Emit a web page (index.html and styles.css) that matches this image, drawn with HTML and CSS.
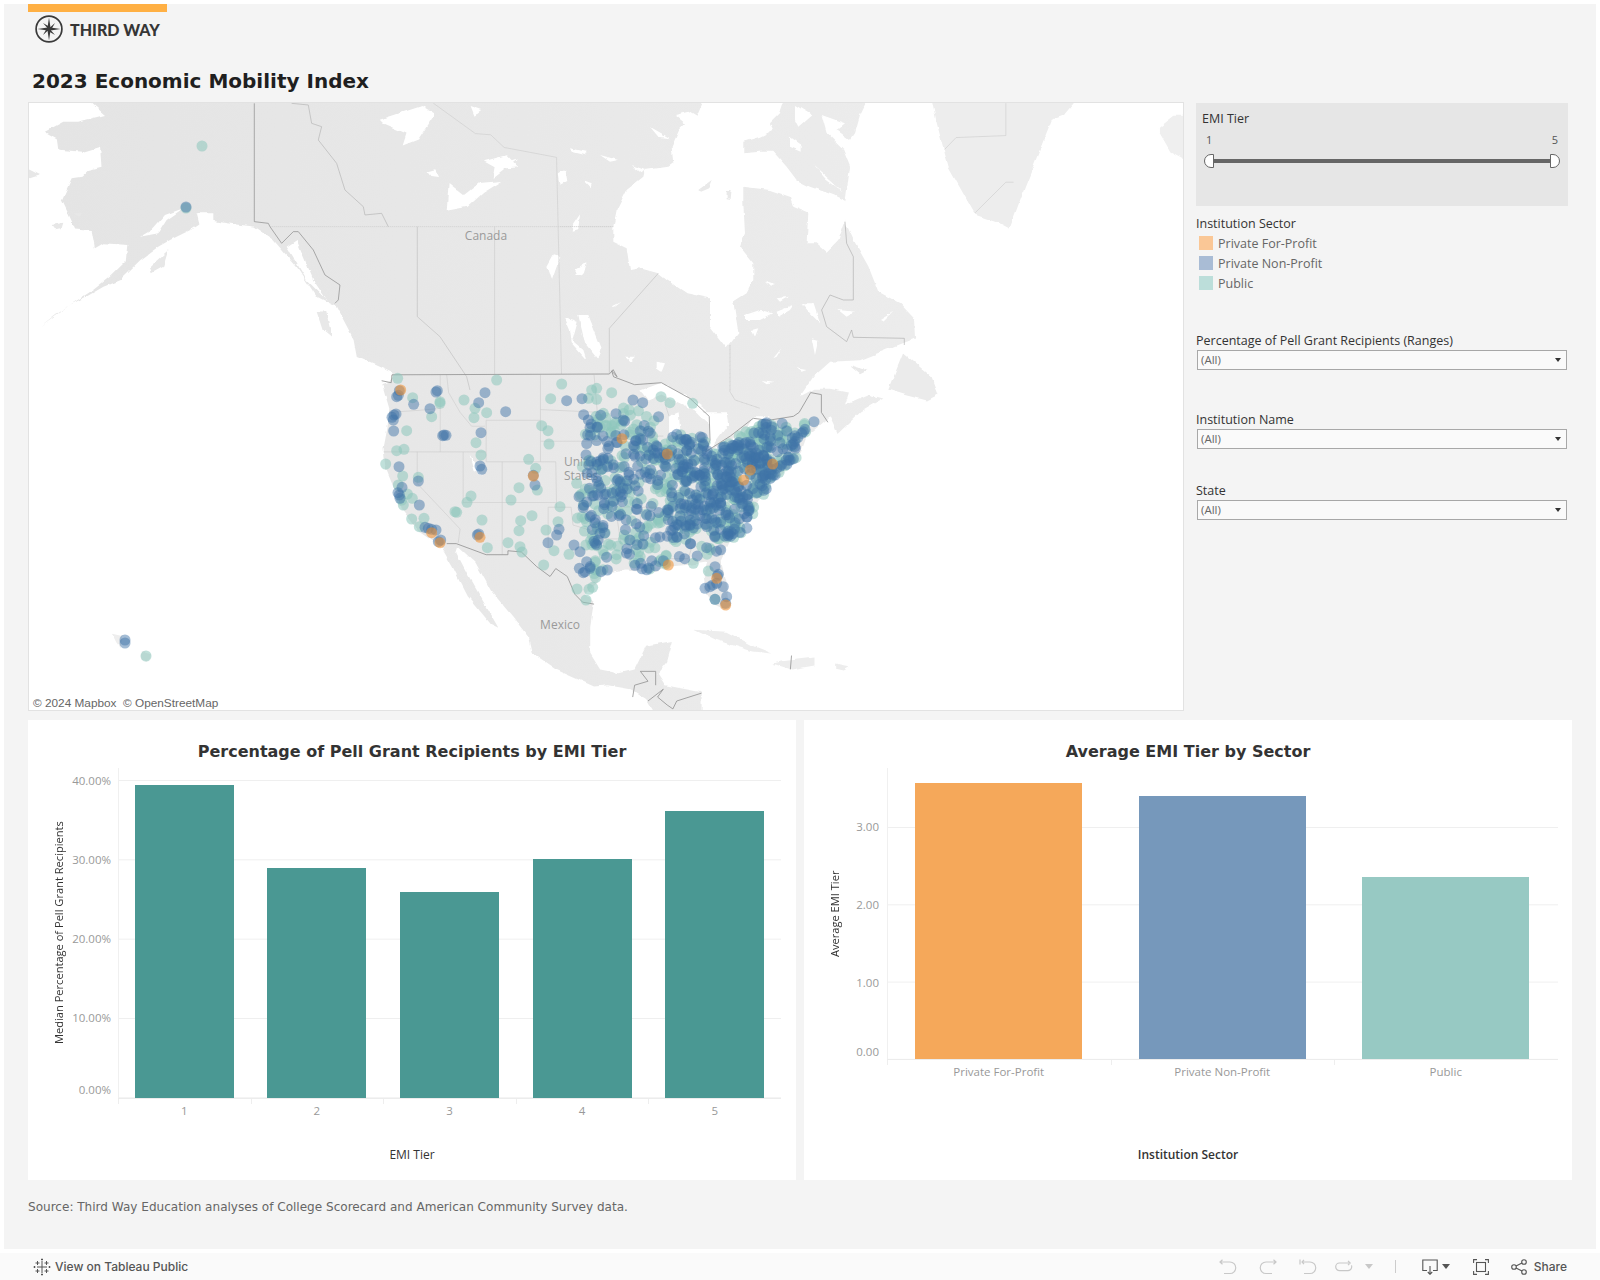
FILE: index.html
```html
<!DOCTYPE html>
<html lang="en">
<head>
<meta charset="utf-8">
<title>2023 Economic Mobility Index</title>
<link rel="stylesheet" href="styles.css">
</head>
<body>
<div class="dash">
  <div class="accent"></div>
  <div class="logo">
    <svg class="logo-mark" viewBox="0 0 28 28" width="28" height="28">
      <circle cx="14" cy="14" r="12.9" fill="none" stroke="#3a3a3a" stroke-width="1.7"/>
      <path d="M14 2.500 L15.500 12.500 L25.500 14 L15.500 15.500 L14 25.500 L12.500 15.500 L2.500 14 L12.500 12.500 Z" fill="#3a3a3a"/>
      <path d="M8 8 L15.300 12.200 L20 8 L15.800 15.300 L20 20 L12.700 15.800 L8 20 L12.200 12.700 Z" fill="#3a3a3a"/>
    </svg>
    <span class="logo-text">THIRD WAY</span>
  </div>
  <h1 class="title">2023 Economic Mobility Index</h1>

  <div class="top-row">
    <div class="map">
      <svg class="map-svg" viewBox="28 102 1156 609" width="1156" height="609">
        <defs>
          <linearGradient id="landTone" x1="0" x2="1" y1="0" y2="0">
            <stop offset="0" stop-color="#e4e4e4"/>
            <stop offset="0.55" stop-color="#e8e8e8"/>
            <stop offset="1" stop-color="#ececec"/>
          </linearGradient>
          <filter id="rough" filterUnits="userSpaceOnUse" x="-20" y="60" width="1260" height="700" color-interpolation-filters="sRGB">
            <feTurbulence type="fractalNoise" baseFrequency=".09" numOctaves="3" seed="4" result="n"/>
            <feDisplacementMap in="SourceGraphic" in2="n" scale="4" xChannelSelector="R" yChannelSelector="G"/>
          </filter>
        </defs>
        <g filter="url(#rough)">
          <!-- coast outlines -->
          <g transform="translate(20 100) scale(.3827 .3954)" fill="#e8e8e8">
            <path fill="url(#landTone)" d="M187 -30 L2230 -30 L2195 40 L2182 84 L2151 126 L2169 169 L2156 261 L2156 308 L2178 354 L2217 421 L2243 485 L2299 514 L2336 552 L2339 603 L2300 618 L2195 658 L2117 662 L2073 700 L2038 750 L2076 730 L2116 730 L2166 740 L2156 770 L2216 745 L2256 755 L2196 790 L2136 845 L2126 820 L2116 800 L2106 810 L2056 850 L2041 890 L2006 930 L1986 950 L1956 960 L1936 1000 L1916 1040 L1856 1115 L1831 1165 L1846 1220 L1856 1280 L1841 1290 L1816 1280 L1791 1240 L1786 1200 L1796 1170 L1756 1175 L1696 1180 L1646 1195 L1586 1190 L1546 1195 L1516 1210 L1476 1250 L1500 1270 L1490 1330 L1490 1400 L1516 1440 L1566 1450 L1606 1440 L1636 1380 L1706 1368 L1691 1420 L1666 1450 L1686 1480 L1781 1498 L1781 1600 L1690 1600 L1636 1515 L1596 1490 L1536 1480 L1500 1483 L1400 1440 L1340 1400 L1330 1360 L1290 1310 L1230 1240 L1190 1170 L1145 1130 L1140 1145 L1170 1200 L1250 1335 L1230 1325 L1170 1255 L1130 1180 L1100 1130 L1040 1090 L1000 1040 L985 1000 L955 930 L950 880 L960 830 L965 780 L945 715 L965 715 L975 690 L930 670 L880 650 L871 603 L827 523 L775 497 L723 422 L662 354 L610 320 L540 312 L488 303 L453 325 L392 354 L361 371 L314 405 L261 455 L218 472 L174 497 L131 518 L52 573 L96 540 L192 480 L235 447 L279 405 L283 367 L218 362 L196 375 L187 329 L144 325 L126 287 L109 253 L135 198 L161 194 L179 177 L213 169 L209 118 L165 131 L100 126 L96 97 L65 80 L113 55 L152 55 L222 38 L187 8 Z"/>
            <path fill="#ededed" d="M2376 -30 L2396 60 L2426 170 L2496 290 L2556 310 L2586 325 L2626 220 L2696 50 L2726 40 L2786 -30 Z"/>
            <path fill="#efefef" d="M2976 70 L3016 40 L3080 40 L3080 170 L3006 130 L2976 80 Z"/>
            <path fill="#ebebeb" d="M2269 733 L2308 640 L2382 700 L2400 745 L2370 760 L2310 745 Z"/>
            <path fill="#ededed" d="M1761 1340 L1846 1345 L1916 1380 L1966 1400 L1916 1395 L1816 1365 Z"/>
            <path fill="#ededed" d="M1986 1420 L2076 1410 L2076 1430 L2016 1440 L1966 1425 Z"/>
            <path fill="#ededed" d="M2130 1425 L2165 1432 L2150 1440 L2130 1436 Z"/>
            <path fill="#eeeeee" d="M240 1350 L270 1356 L262 1385 L252 1372 Z"/>
            <path fill="#eeeeee" d="M318 1396 L340 1402 L336 1418 L320 1416 Z"/>
            <path d="M775 535 L800 535 L815 600 L790 580 Z"/>
            <path fill="#ffffff" d="M1235 200 L1300 150 L1240 170 Z"/>
            <path fill="#ffffff" d="M940 50 L1050 15 L1085 35 L1040 100 L1000 115 L1010 85 L950 60 Z"/>
            <path fill="#ffffff" d="M1115 280 L1120 210 L1160 240 L1200 210 L1260 205 L1210 235 L1170 270 Z"/>
            <path fill="#ffffff" d="M1212 155 L1270 140 L1300 170 L1250 175 Z"/>
            <path fill="#ffffff" d="M1405 185 L1425 175 L1430 205 L1410 215 Z"/>
            <path fill="#ffffff" d="M1065 180 L1085 175 L1095 195 L1075 192 Z"/>
            <path fill="#ffffff" d="M1378 420 L1395 390 L1412 395 L1390 455 Z"/>
            <path fill="#ffffff" d="M1450 430 L1480 410 L1470 445 Z"/>
            <path fill="#ffffff" d="M1175 15 L1205 25 L1185 40 Z"/>
            <path fill="#ffffff" d="M1175 900 L1195 930 L1210 950 L1185 935 Z"/>
            <path fill="#ffffff" d="M920 730 L975 700 L965 715 Z"/>
            <path fill="#ffffff" d="M1621 735 L1676 715 L1751 755 L1796 785 L1771 790 L1731 770 L1676 745 L1641 760 Z"/>
            <path fill="#ffffff" d="M1696 800 L1721 790 L1726 840 L1711 870 L1696 840 Z"/>
            <path fill="#ffffff" d="M1756 780 L1791 790 L1846 790 L1851 820 L1801 885 L1801 820 L1776 800 Z"/>
            <path fill="#ffffff" d="M1791 890 L1856 860 L1876 850 L1861 870 L1806 900 Z"/>
            <path fill="#ffffff" d="M1916 800 L1961 800 L1946 825 L1901 830 Z"/>
          </g>
          <!-- Alaska details -->
          <g transform="translate(20 100) scale(.3333)">
            <path fill="#ffffff" d="M490 325 L440 360 L415 400 L360 410 L395 390 L435 345 Z"/>
            <path fill="#ffffff" d="M530 340 L580 340 L580 370 L540 380 Z"/>
            <path fill="#ffffff" d="M800 440 L830 420 L880 540 L920 600 L860 540 Z"/>
            <path fill="#e7e7e7" d="M390 500 L445 450 L430 500 L395 520 Z"/>
            <path fill="#e7e7e7" d="M95 375 L130 368 L125 385 L105 388 Z"/>
            <path fill="#e7e7e7" d="M20 205 L60 225 L30 235 L20 232 Z"/>
            <path fill="#e7e7e7" d="M160 340 L185 340 L180 352 Z"/>
          </g>
          <!-- Hudson Bay, Foxe Basin, Hudson Strait, inland water -->
          <g transform="translate(560 100) scale(.3333)" fill="#ffffff">
            <path d="M160 380 L170 330 L200 270 L250 230 L255 210 L325 200 L340 190 L335 140 L360 85 L375 70 L345 45 L385 35 L410 50 L440 -20 L680 -20 L660 40 L630 70 L640 90 L600 110 L550 125 L550 160 L600 155 L640 155 L680 200 L710 240 L750 260 L820 285 L870 310 L855 365 L835 420 L800 455 L770 430 L740 430 L745 340 L700 320 L690 290 L630 270 L550 260 L550 310 L555 400 L540 440 L580 490 L580 540 L560 580 L520 605 L535 700 L500 745 L450 680 L450 595 L380 580 L320 540 L295 520 L240 505 L210 510 L200 445 L160 425 Z"/>
            <path fill="#e9e9e9" d="M415 270 L455 240 L445 265 L420 275 Z"/>
            <path fill="#e9e9e9" d="M500 270 L515 270 L512 300 L500 298 Z"/>
            <path d="M705 15 L755 45 L715 80 L705 60 Z"/>
            <path d="M785 45 L855 70 L830 90 L885 130 L850 150 L800 100 Z"/>
            <path d="M690 110 L725 135 L725 155 L690 140 Z"/>
            <path d="M760 195 L810 240 L850 275 L800 240 Z"/>
            <path d="M30 145 L80 155 L75 165 L35 155 Z"/>
            <path d="M120 165 L175 180 L150 185 Z"/>
            <path d="M215 195 L255 210 L245 220 Z"/>
            <path d="M270 80 L330 115 L295 110 Z"/>
            <path d="M0 210 L22 210 L10 250 L0 240 Z"/>
            <path d="M72 240 L98 250 L95 265 Z"/>
            <path d="M40 370 L60 340 L55 390 L35 395 Z"/>
            <path d="M45 525 L80 490 L70 525 Z"/>
            <path d="M155 620 L185 605 L165 620 Z"/>
            <path d="M55 645 L85 645 L125 745 L115 780 L75 730 Z"/>
            <path d="M15 655 L50 665 L35 720 L70 750 L80 780 L35 730 L30 690 Z"/>
            <path d="M195 770 L225 770 L210 785 Z"/>
            <path d="M290 785 L315 790 L305 815 L290 805 Z"/>
            <path d="M555 645 L600 630 L640 640 L600 660 L555 660 Z"/>
            <path d="M650 635 L700 615 L690 630 L655 650 Z"/>
            <path d="M650 595 L685 590 L660 605 Z"/>
            <path d="M615 545 L645 555 L630 560 Z"/>
            <path d="M725 610 L760 610 L780 670 L750 640 Z"/>
            <path d="M835 630 L885 635 L860 650 Z"/>
            <path d="M960 660 L1000 635 L970 665 Z"/>
            <path d="M575 690 L595 685 L585 710 Z"/>
            <path d="M640 775 L668 740 L650 770 Z"/>
            <path d="M710 805 L740 810 L725 815 Z"/>
            <path d="M605 840 L640 845 L620 850 Z"/>
            <path d="M755 715 L775 720 L765 765 Z"/>
            <path fill="#e9e9e9" d="M870 795 L920 810 L900 820 Z"/>
          </g>
        </g>
        <!-- light boundaries -->
        <g transform="translate(20 100) scale(.3827 .3954)" fill="none" stroke="#cbcbcb" stroke-width="1.5">
          <polyline points="1240,320 1240,693"/>
          <polyline points="1080,8 1190,85 1230,88 1265,120 1402,145 1415,693"/>
          <polyline points="2576,8 2576,90 2446,95 2416,125"/>
          <polyline points="2496,285 2576,208 2596,208"/>
          <polyline points="1098,695 1098,890"/>
          <polyline points="950,890 1218,890"/>
          <polyline points="965,790 1040,785 1100,780"/>
          <polyline points="1218,810 1360,810"/>
          <polyline points="1218,810 1218,915"/>
          <polyline points="1038,890 1038,970 1150,1085 1145,1120"/>
          <polyline points="1158,890 1158,1020"/>
          <polyline points="1158,1018 1400,1018"/>
          <polyline points="1218,915 1400,915"/>
          <polyline points="1260,915 1260,1150"/>
          <polyline points="1360,695 1360,915"/>
          <polyline points="1400,915 1402,1030"/>
          <polyline points="1380,1030 1440,1030 1445,1075 1516,1095"/>
          <polyline points="1380,1030 1380,1138"/>
          <polyline points="1360,783 1516,790"/>
          <polyline points="1360,863 1516,863"/>
          <polyline points="1500,695 1515,860"/>
          <polyline points="1115,695 1120,740 1150,790 1180,825 1215,825"/>
          <polyline points="1516,850 1681,850"/>
          <polyline points="1556,1030 1666,1030"/>
          <polyline points="1556,1030 1576,1160"/>
          <polyline points="1516,1110 1621,1110 1621,1040"/>
          <polyline points="1676,1160 1746,1160 1756,1130"/>
          <polyline points="1686,770 1696,800"/>
        </g>
        <g transform="translate(20 100) scale(.3333)" fill="none" stroke="#cbcbcb" stroke-width="1.8">
          <polyline points="750,380 1620,380" stroke-dasharray="4 2"/>
          <polyline points="815,10 865,15 875,70 905,80 895,120 950,190 975,270 1030,320 1035,345 1085,340 1105,380" stroke="#aeaeae"/>
          <polyline points="1192,380 1192,650 1260,710 1340,830 1350,870" stroke="#bcbcbc"/>
        </g>
        <g transform="translate(560 100) scale(.3333)" fill="none" stroke="#bdbdbd" stroke-width="1.8">
          <polyline points="0,380 160,380" stroke-dasharray="4 2"/>
          <polyline points="295,520 148,685 148,820"/>
          <polyline points="510,735 510,875 525,900 600,925" stroke-dasharray="3 1"/>
          <polyline points="855,365 860,430 880,470 880,600 850,600 810,585 785,630 800,680 860,725 875,690 880,712 1033,715 1033,735" stroke="#a8a8a8"/>
        </g>
        <!-- darker national boundaries -->
        <g transform="translate(20 100) scale(.3827 .3954)" fill="none" stroke="#8e8e8e" stroke-width="2">
          <polyline points="945,710 970,715 972,695 1540,693 1550,682 1560,700 1546,685 1551,700 1606,720 1676,715 1751,755 1801,800 1803,860 1791,890 1856,850 1916,805 1956,810 2021,800 2036,790 2066,740 2094,745 2094,790 2111,815"/>
          <polyline points="1115,1122 1140,1122 1218,1150 1275,1150 1275,1140 1310,1143 1350,1180 1385,1205 1400,1185 1430,1205 1450,1250 1470,1270 1500,1275"/>
          <polyline points="1601,1510 1606,1480 1641,1470 1621,1445 1661,1445 1661,1480"/>
          <polyline points="1641,1520 1681,1490 1666,1510 1691,1530 1706,1540 1716,1520 1781,1500"/>
          <polyline points="2016,1405 2013,1440"/>
        </g>
        <polyline transform="translate(20 100) scale(.3333)" fill="none" stroke="#8e8e8e" stroke-width="2.200" points="703,10 703,365 745,370 750,380 785,430 820,395 835,395 880,450 915,525 960,555 955,600 945,610"/>
        <text class="map-label" x="486" y="240" text-anchor="middle">Canada</text>
        <text class="map-label" x="564" y="466">United</text>
        <text class="map-label" x="564" y="480">States</text>
        <text class="map-label" x="560" y="629" text-anchor="middle">Mexico</text>
        <g id="dots"></g>
      </svg>
      <div class="attribution">© 2024 Mapbox  © OpenStreetMap</div>
    </div>

    <aside class="side">
      <div class="range-filter">
        <div class="range-title">EMI Tier</div>
        <div class="range-values"><span>1</span><span>5</span></div>
        <div class="slider">
          <span class="handle handle-left"></span>
          <span class="track"></span>
          <span class="handle handle-right"></span>
        </div>
      </div>
      <div class="legend">
        <div class="side-title">Institution Sector</div>
        <div class="legend-row"><span class="swatch swatch-orange"></span>Private For-Profit</div>
        <div class="legend-row"><span class="swatch swatch-blue"></span>Private Non-Profit</div>
        <div class="legend-row"><span class="swatch swatch-teal"></span>Public</div>
      </div>
      <div class="filter filter-pell">
        <div class="side-title">Percentage of Pell Grant Recipients (Ranges)</div>
        <div class="dropdown">(All)<span class="caret"></span></div>
      </div>
      <div class="filter filter-name">
        <div class="side-title">Institution Name</div>
        <div class="dropdown">(All)<span class="caret"></span></div>
      </div>
      <div class="filter filter-state">
        <div class="side-title">State</div>
        <div class="dropdown">(All)<span class="caret"></span></div>
      </div>
    </aside>
  </div>

  <div class="charts">
    <section class="card card-pell">
      <h2 class="card-title">Percentage of Pell Grant Recipients by EMI Tier</h2>
      <div class="chart">
        <div class="y-title">Median Percentage of Pell Grant Recipients</div>
        <div class="y-labels">
          <span>40.00%</span><span>30.00%</span><span>20.00%</span><span>10.00%</span><span>0.00%</span>
        </div>
        <div class="plot-wrap">
          <div class="plot">
            <div class="cell"><div class="bar bar-teal" style="height:313px"></div></div>
            <div class="cell"><div class="bar bar-teal" style="height:230px"></div></div>
            <div class="cell"><div class="bar bar-teal" style="height:206px"></div></div>
            <div class="cell"><div class="bar bar-teal" style="height:239px"></div></div>
            <div class="cell"><div class="bar bar-teal" style="height:287px"></div></div>
          </div>
          <div class="x-labels">
            <span>1</span><span>2</span><span>3</span><span>4</span><span>5</span>
          </div>
        </div>
      </div>
      <div class="x-title">EMI Tier</div>
    </section>
    <section class="card card-sector">
      <h2 class="card-title">Average EMI Tier by Sector</h2>
      <div class="chart">
        <div class="y-title">Average EMI Tier</div>
        <div class="y-labels">
          <span>3.00</span><span>2.00</span><span>1.00</span><span>0.00</span>
        </div>
        <div class="plot-wrap">
          <div class="plot">
            <div class="cell"><div class="bar bar-orange" style="height:276px"></div></div>
            <div class="cell"><div class="bar bar-blue" style="height:263px"></div></div>
            <div class="cell"><div class="bar bar-mint" style="height:182px"></div></div>
          </div>
          <div class="x-labels">
            <span>Private For-Profit</span><span>Private Non-Profit</span><span>Public</span>
          </div>
        </div>
      </div>
      <div class="x-title x-title-strong">Institution Sector</div>
    </section>
  </div>

  <p class="source">Source: Third Way Education analyses of College Scorecard and American Community Survey data.</p>
</div>

<footer class="toolbar">
  <div class="tb-left">
    <svg class="tb-logo" viewBox="0 0 18 18" width="18" height="18" fill="none" stroke="#555" stroke-width="1">
      <path d="M9 3v12M4 9h10M9 0.500v2M8 1.500h2M9 15.500v2M8 16.500h2M0.500 9h2M1.500 8v2M15.500 9h2M16.500 8v2M4.500 3v4M2.500 5h4M13.500 3v4M11.500 5h4M4.500 11v4M2.500 13h4M13.500 11v4M11.500 13h4"/>
    </svg>
    <span class="tb-link">View on Tableau Public</span>
  </div>
  <div class="tb-right">
    <svg class="tb-icon" viewBox="0 0 18 16" width="18" height="16" fill="none" stroke="#c8c8c8" stroke-width="1.2"><path d="M1 3h10a5.500 5.500 0 0 1 0 11.500H5M3.500 .8L1 3l2.500 2.200"/></svg>
    <svg class="tb-icon tb-gap-redo" viewBox="0 0 18 16" width="18" height="16" fill="none" stroke="#c8c8c8" stroke-width="1.2"><path d="M17 3H7a5.500 5.500 0 0 0 0 11.500h6M14.500 .8L17 3l-2.500 2.200"/></svg>
    <svg class="tb-icon tb-gap-revert" viewBox="0 0 18 16" width="18" height="16" fill="none" stroke="#c8c8c8" stroke-width="1.2"><path d="M1 .5v5M3 3h8a5.500 5.500 0 0 1 0 11.500H5M5 .8L3 3l2 2.200"/></svg>
    <svg class="tb-icon tb-gap-refresh" viewBox="0 0 18 16" width="18" height="16" fill="none" stroke="#c8c8c8" stroke-width="1.2"><path d="M14 4H4.500a3.800 3.800 0 0 0 0 7.600H13a3.800 3.800 0 0 0 3.500-5.200M13 1.800L15.200 4 13 6.200"/></svg>
    <span class="tb-caret tb-caret-off"></span>
    <span class="tb-sep"></span>
    <svg class="tb-icon" viewBox="0 0 16 16" width="16" height="16" fill="none" stroke="#555" stroke-width="1.100"><path d="M5 11.500H.8V1h14.400v10.500H11M8 7v8M5.800 13L8 15.300 10.200 13"/></svg>
    <span class="tb-caret"></span>
    <svg class="tb-icon tb-gap-full" viewBox="0 0 16 16" width="16" height="16" fill="none" stroke="#555" stroke-width="1.100"><path d="M.6 4V.6H4M12 .6h3.400V4M15.400 12v3.400H12M4 15.400H.6V12"/><rect x="3.500" y="3.500" width="9" height="9"/></svg>
    <svg class="tb-icon tb-gap-share" viewBox="0 0 16 16" width="16" height="16" fill="none" stroke="#555" stroke-width="1.100"><circle cx="3" cy="8" r="2.300"/><circle cx="13" cy="3" r="2.300"/><circle cx="13" cy="13" r="2.300"/><path d="M5 7l6-3M5 9l6 3"/></svg>
    <span class="tb-link tb-share">Share</span>
  </div>
</footer>
<script src="map.js"></script>
</body>
</html>
```
FILE: styles.css
```css
* { box-sizing: border-box; }
html, body { margin: 0; padding: 0; }
body {
  width: 1600px;
  height: 1280px;
  background: #ffffff;
  overflow: hidden;
  display: flex;
  flex-direction: column;
  font-family: "Open Sans", "Noto Sans", sans-serif;
}
.dash {
  margin: 4px 4px 0;
  height: 1245px;
  padding: 0 24px;
  background: #f4f4f4;
}
.accent { width: 139px; height: 8px; background: #ffb044; }
.logo { height: 34px; display: flex; align-items: center; padding-left: 7px; gap: 7px; }
.logo-mark { flex: none; }
.logo-text {
  font-family: "Lato", sans-serif;
  font-weight: 900;
  font-size: 16px;
  letter-spacing: 0;
  color: #363636;
}
.title {
  margin: 23px 0 9px;
  padding-left: 4px;
  font-family: "DejaVu Sans", sans-serif;
  font-weight: 700;
  font-size: 20px;
  line-height: 24px;
  color: #1f1f1f;
}
.top-row { display: flex; gap: 12px; height: 609px; }
.map {
  position: relative;
  width: 1156px;
  height: 609px;
  background: #ffffff;
  overflow: hidden;
  flex: none;
}
.map::after {
  content: "";
  position: absolute;
  inset: 0;
  border: 1px solid #e2e2e2;
  pointer-events: none;
}
.map-svg { display: block; }
.map-label { font-family: "Open Sans", sans-serif; font-size: 12px; fill: #9a9a9a; }
.dot-teal { fill: #8cc6bc; fill-opacity: .55; }
.dot-blue { fill: #3f74a8; fill-opacity: .48; }
.dot-orange { fill: #f28e2b; fill-opacity: .55; }
.attribution {
  position: absolute;
  left: 3px;
  bottom: 1px;
  padding: 0 2px;
  background: rgba(255, 255, 255, .6);
  font-family: "Liberation Sans", sans-serif;
  font-size: 11.8px;
  line-height: 14px;
  white-space: pre;
  color: #666;
}
.side { width: 372px; flex: none; padding-top: 1px; color: #333; font-size: 12px; }
.range-filter { height: 103px; padding: 8px 6px 0 6px; background: #e6e6e6; }
.range-title, .side-title { font-size: 12.5px; line-height: 16px; color: #333; white-space: nowrap; }
.range-values {
  display: flex;
  justify-content: space-between;
  margin-top: 5px;
  padding: 0 4px;
  font-size: 11px;
  line-height: 16px;
  color: #555;
}
.slider { display: flex; align-items: center; height: 14px; margin: 6px 2px 0 0; padding: 0 0 0 2px; }
.track { flex: 1; height: 4px; background: #666; }
.handle { flex: none; width: 10px; height: 14px; background: #fff; border: 1px solid #666; }
.handle-left { border-radius: 7px 0 0 7px; }
.handle-right { border-radius: 0 7px 7px 0; }
.legend { margin-top: 10px; }
.legend .side-title { margin-bottom: 1px; }
.legend-row {
  display: flex;
  align-items: center;
  height: 20px;
  padding-left: 3px;
  gap: 5px;
  font-size: 12.5px;
  color: #666;
  white-space: nowrap;
}
.swatch { width: 14px; height: 14px; flex: none; }
.swatch-orange { background: #fac796; }
.swatch-blue { background: #a9bcd5; }
.swatch-teal { background: #bcdeda; }
.filter-pell { margin-top: 40px; }
.filter-name { margin-top: 42px; }
.filter-state { margin-top: 34px; }
.dropdown {
  position: relative;
  height: 20px;
  margin: 1px 1px 0 1px;
  padding-left: 3px;
  background: #fafafa;
  border: 1px solid #a8a8a8;
  font-size: 11.5px;
  line-height: 18px;
  color: #666;
}
.caret {
  position: absolute;
  right: 5px;
  top: 7px;
  border-left: 3px solid transparent;
  border-right: 3px solid transparent;
  border-top: 4px solid #333;
}
.charts { display: flex; gap: 8px; margin-top: 9px; height: 460px; }
.card {
  width: 768px;
  height: 460px;
  padding-bottom: 17px;
  display: flex;
  flex-direction: column;
  background: #fff;
}
.card-title {
  margin: 0;
  padding-top: 21px;
  height: 48px;
  text-align: center;
  font-family: "DejaVu Sans", sans-serif;
  font-weight: 700;
  font-size: 16px;
  line-height: 22px;
  color: #333;
}
.chart { display: flex; padding-left: 21px; }
.y-title {
  width: 20px;
  flex: none;
  writing-mode: vertical-rl;
  transform: rotate(180deg);
  text-align: center;
  font-size: 11.1px;
  line-height: 20px;
  color: #333;
  white-space: nowrap;
}
.y-labels {
  flex: none;
  display: flex;
  flex-direction: column;
  align-items: flex-end;
  font-size: 11.5px;
  line-height: 16px;
  color: #999;
}
.plot-wrap { flex: none; }
.plot {
  display: flex;
  align-items: flex-end;
  box-shadow: inset 1px 0 0 #f0f0f0;
  border-bottom: 1px solid #ececec;
  background-image: linear-gradient(#efefef 1px, transparent 1px);
}
.cell { flex: 1; display: flex; justify-content: center; }
.x-labels { display: flex; }
.x-labels span {
  position: relative;
  flex: 1;
  padding-top: 4px;
  text-align: center;
  font-size: 11.5px;
  line-height: 16px;
  color: #999;
}
.x-labels span::before {
  content: "";
  position: absolute;
  left: 0;
  top: 0;
  height: 5px;
  border-left: 1px solid #eee;
}
.bar { width: 99px; }
.bar-teal { background: #4a9893; }
.bar-orange { background: #f5a85a; }
.bar-blue { background: #7698bb; }
.bar-mint { background: #97c9c3; }

.card-pell .y-title { height: 330px; }
.card-pell .y-labels { width: 42px; padding-top: 5px; margin-right: 7px; }
.card-pell .y-labels span + span { margin-top: 63px; }
.card-pell .y-labels span:last-child { margin-top: 56px; }
.card-pell .plot-wrap { width: 663px; }
.card-pell .plot { height: 331px; background-size: 100% 79.33px; background-position: 0 12px; }

.card-sector .y-title { height: 291px; }
.card-sector .y-labels { width: 34px; padding-top: 51px; margin-right: 8px; }
.card-sector .y-labels span + span { margin-top: 62px; }
.card-sector .y-labels span:last-child { margin-top: 53px; }
.card-sector .plot-wrap { width: 670.5px; }
.card-sector .plot { height: 292px; background-size: 100% 77.3px; background-position: 0 59px; }
.card-sector .bar { width: 167px; }

.x-title {
  margin-top: auto;
  padding-top: 1px;
  text-align: center;
  font-size: 12px;
  line-height: 16px;
  color: #333;
}
.x-title-strong { font-weight: 600; }
.source {
  margin: 19px 0 0;
  font-family: "DejaVu Sans", sans-serif;
  font-size: 12.05px;
  line-height: 16px;
  color: #666;
}
.toolbar {
  margin-top: 4px;
  height: 27px;
  flex: none;
  display: flex;
  justify-content: space-between;
  align-items: center;
  padding: 0 33px 0 33px;
  background: #fafafa;
}
.tb-left, .tb-right { display: flex; align-items: center; }
.tb-left { gap: 4px; }
.tb-link { font-family: "Inter", "Roboto", sans-serif; font-weight: 500; font-size: 12px; color: #555; }
.tb-icon { flex: none; display: block; }
.tb-gap-redo { margin-left: 22px; }
.tb-gap-revert { margin-left: 22px; }
.tb-gap-refresh { margin-left: 18px; }
.tb-caret {
  margin-left: 4px;
  border-left: 4px solid transparent;
  border-right: 4px solid transparent;
  border-top: 5px solid #555;
}
.tb-caret-off { margin-left: 12px; border-top-color: #c8c8c8; }
.tb-sep { width: 1px; height: 13px; margin: 0 26px 0 22px; background: #ccc; }
.tb-gap-full { margin-left: 23px; }
.tb-gap-share { margin-left: 22px; }
.tb-share { margin-left: 7px; }
```
FILE: map.js
```js
// Scatter of institutions. Hand-placed marks are in a 3x frame of the US (page = 370 + v / 3);
// the dense eastern field is seeded inside rough outlines so each render is identical.
var teal = [83,25,380,30,575,42,680,55,665,60,725,68,680,88,655,85,542,86,128,83,210,95,210,100,282,90,315,115,350,128,312,143,185,140,110,182,80,242,102,238,47,282,98,318,145,322,318,218,333,255,515,167,534,182,537,222,476,268,497,295,502,360,447,353,423,390,303,378,291,397,255,425,260,427,336,450,452,452,486,437,447,482,414,518,352,533,450,530,456,546,521,585,528,480,564,455,570,410,552,542,597,553,100,405,127,385,125,447,162,445,148,470,621,657,657,658,668,652,648,690,677,623,873,80,900,98,968,100,700,130,706,168,677,172,637,290,620,340,640,405,636,440,85,345,95,390,112,372,1015,603,1035,688,970,580];
var blue = [345,68,326,98,131,103,180,116,590,92,636,86,818,98,333,188,87,290,145,333,335,298,534,518,627,380,630,545,653,195,717,228,628,595,944,566,1010,533,567,478,560,495,612,525,
 88,62,80,80,85,76,72,135,78,132,70,150,71,183,66,142,222,195,228,196,218,197,202,62,198,66,407,125,641,134,789,90,738,131,764,153,760,150,330,288,490,316,495,345,322,495,326,492,88,375,90,385,84,368,96,352,148,405,175,475,185,478,165,472,198,480,205,515,212,510,640,608,645,605,712,600,836,594,812,580,676,520,672,514,680,524,660,440,664,436,658,355,668,378,700,268,682,285,
 1035,590,1045,613,1042,618,1020,650,1005,655,1040,640,1028,645,1060,650,1070,680,1035,688,1067,700,880,572,660,595,650,575,690,490,
 1300,185,1332,155,1305,178,1295,190,1187,162,1205,170];
var orange = [92,60,185,488,210,518,330,502,756,206,892,252,1121,330,1141,300,1208,282,895,585,1067,705,1040,625,490,318];

var east = [640,130,760,110,850,130,890,150,905,230,940,180,1020,200,1020,260,1090,205,1190,145,1260,160,1340,150,1300,220,1280,270,1220,310,1190,350,1170,420,1120,490,1070,530,1000,570,930,560,880,590,830,605,740,595,700,600,670,640,620,610,640,560,640,500,620,440,620,380,640,300,640,200];
var belt = [1085,210,1190,150,1240,160,1285,215,1280,270,1200,330,1170,400,1120,470,1060,510,960,495,910,510,880,430,930,330,880,260,910,190,1000,200,1020,260];
var midwest = [650,170,880,160,900,300,860,420,830,500,680,530,640,380];

var seed = 20231;
function rnd() { seed = (seed * 16807) % 2147483647; return seed / 2147483647; }
function inside(poly, x, y) {
  var hit = false;
  for (var i = 0, j = poly.length - 2; i < poly.length; j = i, i += 2) {
    var xi = poly[i], yi = poly[i + 1], xj = poly[j], yj = poly[j + 1];
    if ((yi > y) !== (yj > y) && x < (xj - xi) * (y - yi) / (yj - yi) + xi) hit = !hit;
  }
  return hit;
}
function scatter(poly, n, out) {
  var xs = [], ys = [];
  for (var i = 0; i < poly.length; i += 2) { xs.push(poly[i]); ys.push(poly[i + 1]); }
  var x0 = Math.min.apply(null, xs), x1 = Math.max.apply(null, xs);
  var y0 = Math.min.apply(null, ys), y1 = Math.max.apply(null, ys);
  while (n > 0) {
    var x = x0 + rnd() * (x1 - x0), y = y0 + rnd() * (y1 - y0);
    if (inside(poly, x, y)) { out.push(x, y); n--; }
  }
}
scatter(east, 340, teal);
scatter(belt, 90, teal);
scatter(midwest, 90, blue);
scatter(east, 110, blue);
scatter(belt, 280, blue);

var layer = document.getElementById("dots");
function draw(list, cls, zoom) {
  for (var i = 0; i < list.length; i += 2) {
    var c = document.createElementNS("http://www.w3.org/2000/svg", "circle");
    c.setAttribute("cx", zoom ? 370 + list[i] / 3 : list[i]);
    c.setAttribute("cy", zoom ? 370 + list[i + 1] / 3 : list[i + 1]);
    c.setAttribute("r", 5.5);
    c.setAttribute("class", cls);
    layer.appendChild(c);
  }
}
draw(teal, "dot-teal", true);
draw(blue, "dot-blue", true);
draw(orange, "dot-orange", true);
// Alaska and Hawaii sit outside the frame above.
draw([202, 146, 146, 656, 186, 208], "dot-teal", false);
draw([186, 207, 125, 640, 125, 643], "dot-blue", false);
```
